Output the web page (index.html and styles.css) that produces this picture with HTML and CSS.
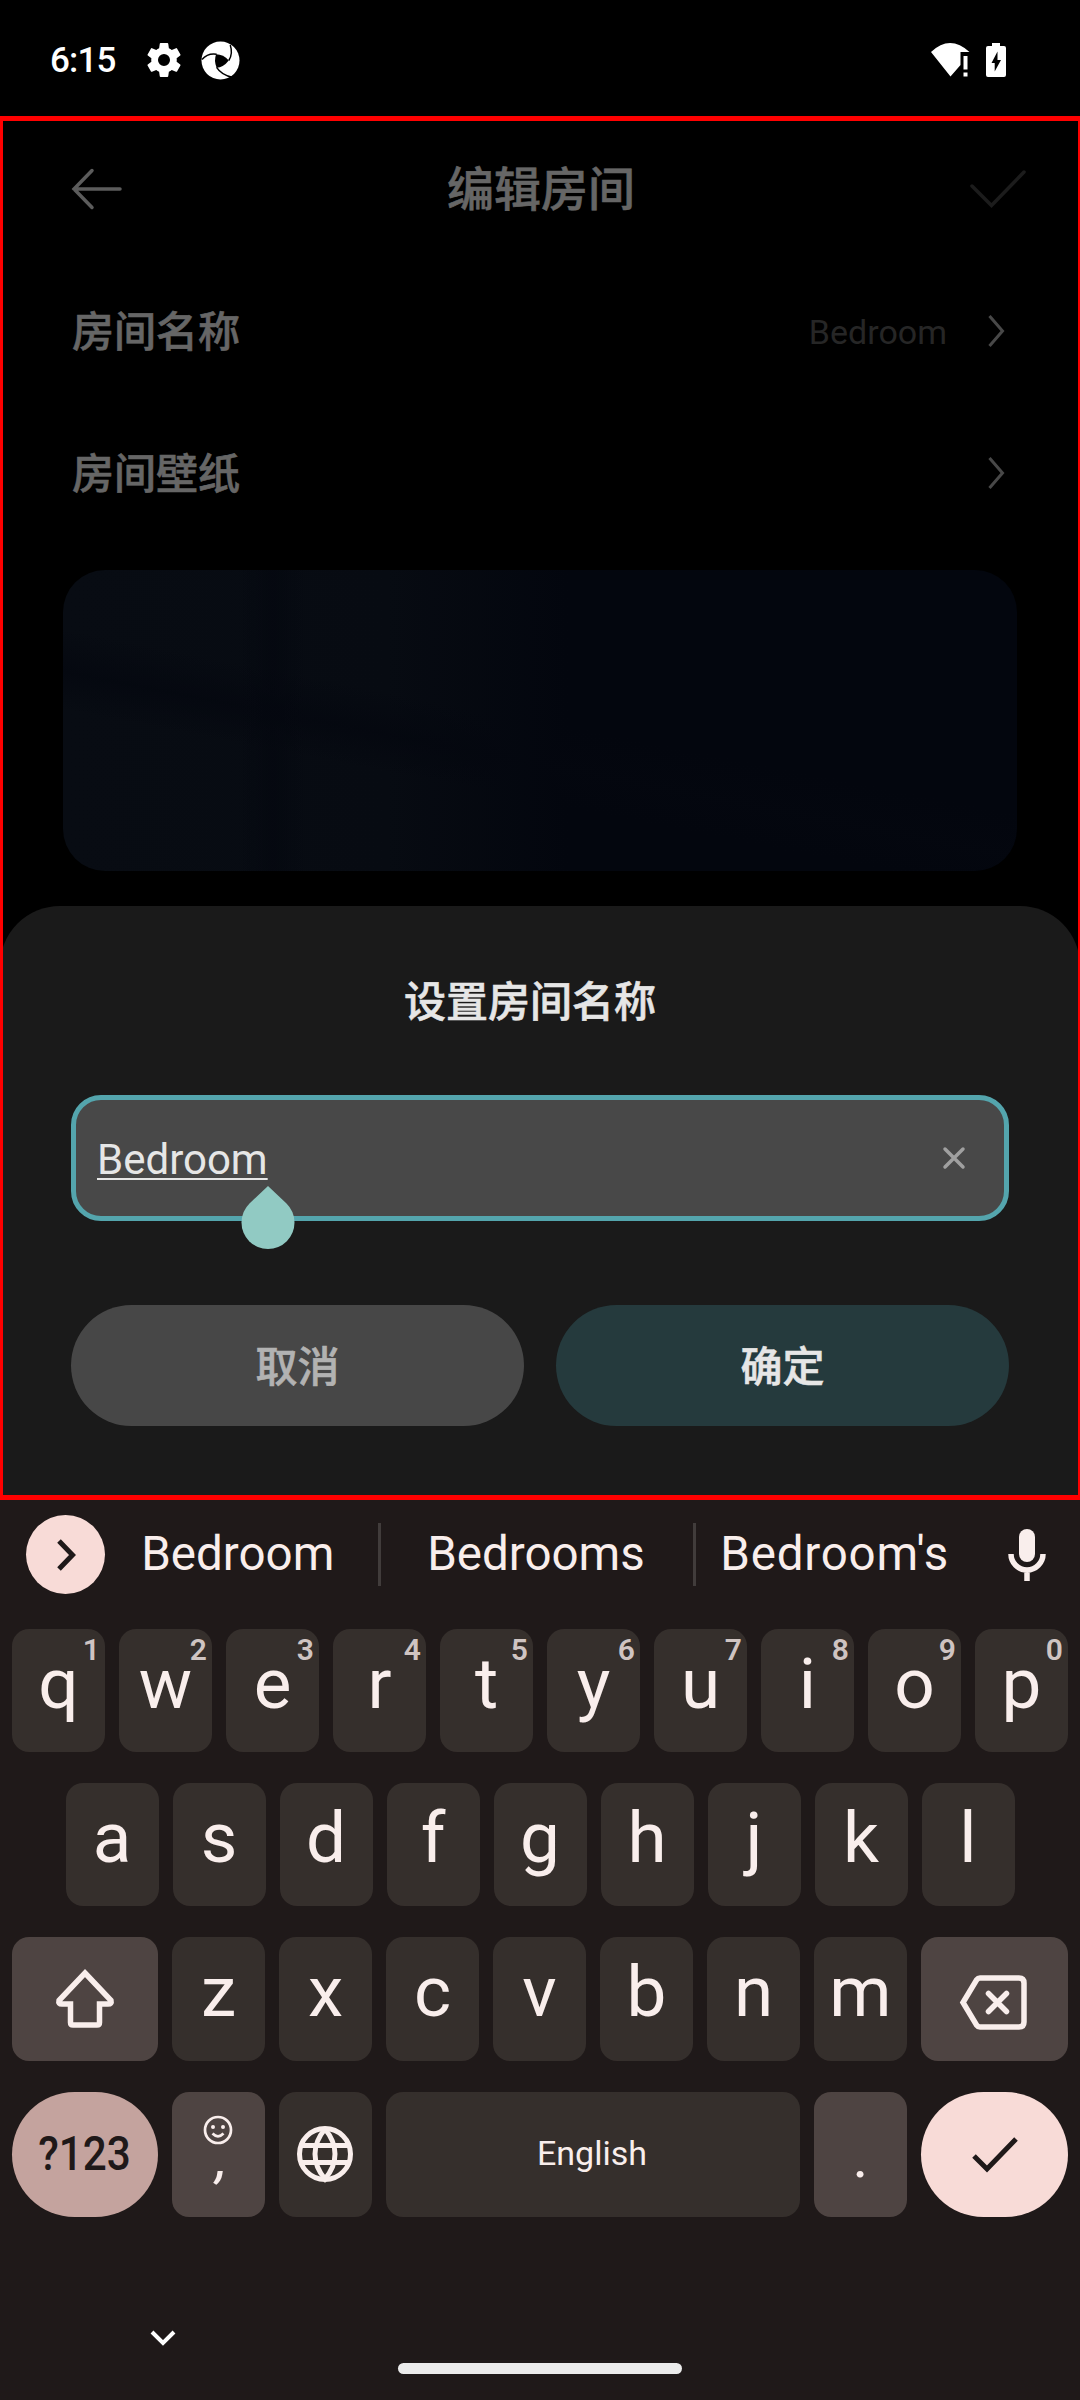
FILE: index.html
```html
<!DOCTYPE html>
<html lang="zh-CN">
<head>
<meta charset="utf-8">
<title>编辑房间</title>
<link rel="stylesheet" href="styles.css">
</head>
<body>
<div class="phone">
  <header class="status">
    <span class="clock">6:15</span>
    <svg class="gear" viewBox="2.400 2.400 19.200 19.200"><path d="M19.14 12.94c.04-.3.06-.61.06-.94s-.02-.64-.07-.94l2.03-1.58a.49.49 0 0 0 .12-.61l-1.92-3.32a.49.49 0 0 0-.59-.22l-2.39.96a7 7 0 0 0-1.62-.94L14.4 2.81A.48.48 0 0 0 13.92 2.4h-3.84a.47.47 0 0 0-.47.41l-.36 2.54c-.59.24-1.13.57-1.62.94l-2.39-.96a.48.48 0 0 0-.59.22L2.74 8.87a.47.47 0 0 0 .12.61l2.03 1.58c-.05.3-.09.63-.09.94s.02.64.07.94l-2.03 1.58a.49.49 0 0 0-.12.61l1.92 3.32c.12.22.37.29.59.22l2.39-.96c.5.38 1.03.7 1.62.94l.36 2.54c.05.24.24.41.48.41h3.84c.24 0 .44-.17.47-.41l.36-2.54c.59-.24 1.13-.56 1.62-.94l2.39.96c.22.08.47 0 .59-.22l1.92-3.32a.47.47 0 0 0-.12-.61zM12 15.4a3.4 3.4 0 1 1 0-6.8 3.4 3.4 0 0 1 0 6.8z"/></svg>
    <svg class="swirl" viewBox="0 0 40 40"><circle cx="20" cy="20" r="19.5"/><path class="hole" d="M15.500 13.500Q23 13.500 28.500 20Q23 27 16 27.500Q13 20 15.500 13.500Z"/><path class="cut" d="M1 19Q7 12 16 13.500M30 4Q33 13 28.500 20M16 27Q21 35 33 37.500"/></svg>
    <span class="spacer"></span>
    <svg class="wifi" viewBox="0 0 40 34"><path d="M0 9Q19 -9 38.500 9H29.500V22L19.500 33.500Z"/><path d="M32.500 13H36.500V26.500H32.500zM32.500 29.500H36.500V33.500H32.500z"/></svg>
    <svg class="battery" viewBox="0 0 20 34"><path d="M6 0h8v3h4q2 0 2 2v27q0 2-2 2H2q-2 0-2-2V5q0-2 2-2h4z"/><path class="bolt" d="M11.500 8.500L5.500 20h3.200v8.500L15 17h-3.500z"/></svg>
  </header>

  <main class="app">
    <div class="bar">
      <svg class="back" viewBox="0 0 50 40"><path d="M20 1.500L2 20L20 38.500M2 20H48"/></svg>
      <h1>编辑房间</h1>
      <svg class="done" viewBox="0 0 56 38"><path d="M2 16L21.500 35.500L54 2"/></svg>
    </div>
    <div class="row"><span class="label">房间名称</span><span class="value">Bedroom</span><svg class="chev" viewBox="0 0 16 32"><path d="M1.500 1L14.500 16L1.500 31"/></svg></div>
    <div class="row"><span class="label">房间壁纸</span><svg class="chev" viewBox="0 0 16 32"><path d="M1.500 1L14.500 16L1.500 31"/></svg></div>
    <div class="wallpaper"></div>

    <section class="sheet">
      <h2>设置房间名称</h2>
      <div class="field">
        <span class="typed">Bedroom<svg class="drop" viewBox="0 0 54 64"><path d="M27 0L45.500 17.500A26.500 26.500 0 1 1 8.500 17.500Z"/></svg></span>
        <svg class="clear" viewBox="0 0 22 22"><path d="M2 2L20 20M20 2L2 20"/></svg>
      </div>
      <div class="actions">
        <button class="cancel">取消</button>
        <button class="ok">确定</button>
      </div>
    </section>
  </main>

  <section class="keyboard">
    <div class="suggest">
      <span class="expand"><svg viewBox="0 0 20 32"><path d="M3 2L16.500 16L3 30"/></svg></span>
      <span class="word w1">Bedroom</span><i></i>
      <span class="word w2">Bedrooms</span><i></i>
      <span class="word w3">Bedroom's</span>
      <svg class="mic" viewBox="0 0 38 52"><path d="M19 0a8 8 0 0 1 8 8v17a8 8 0 0 1-16 0V8a8 8 0 0 1 8-8z"/><path class="line" d="M3 25a16 16 0 0 0 32 0M19 41v11"/></svg>
    </div>
    <div class="keys">
      <div class="krow"><b>q<sup>1</sup></b><b>w<sup>2</sup></b><b>e<sup>3</sup></b><b>r<sup>4</sup></b><b>t<sup>5</sup></b><b>y<sup>6</sup></b><b>u<sup>7</sup></b><b>i<sup>8</sup></b><b>o<sup>9</sup></b><b>p<sup>0</sup></b></div>
      <div class="krow second"><b>a</b><b>s</b><b>d</b><b>f</b><b>g</b><b>h</b><b>j</b><b>k</b><b>l</b></div>
      <div class="krow third">
        <b class="wide alt"><svg class="shift" viewBox="0 0 60 60"><path d="M30 4L56 31.500Q57 35 53 35H44.500V53.500Q44.500 56 42 56H18Q15.500 56 15.500 53.500V35H7Q3 35 4 31.500Z"/></svg></b>
        <b>z</b><b>x</b><b>c</b><b>v</b><b>b</b><b>n</b><b>m</b>
        <b class="wide end alt"><svg class="del" viewBox="0 0 67 55"><path d="M20 3H59Q64 3 64 8V47Q64 52 59 52H20Q18 52 16.500 50L3 27.500L16.500 5Q18 3 20 3Z"/><path d="M28.500 18.500L46.500 36.500M46.500 18.500L28.500 36.500"/></svg></b>
      </div>
      <div class="krow fourth">
        <b class="wide symbols"><span>?123</span></b>
        <b class="alt comma"><svg class="smile" viewBox="0 0 30 30"><circle cx="15" cy="15" r="13"/><path d="M9.500 18.500Q15 24 20.500 18.500"/><path class="dot" d="M10 12v.1M20 12v.1"/></svg><em>,</em></b>
        <b class="lang"><svg class="globe" viewBox="0 0 58 58"><circle cx="29" cy="29" r="25.500"/><path d="M5 20.500H53M5 37.500H53"/><path d="M29 4Q19 16 19 29T29 54Q39 42 39 29T29 4"/></svg></b>
        <b class="space">English</b>
        <b class="alt period">.</b>
        <b class="wide end enter"><svg viewBox="0 0 46 38"><path d="M2 20L15 33L44 3"/></svg></b>
      </div>
    </div>
    <footer class="nav">
      <svg class="hide" viewBox="0 0 26 16"><path d="M2 2L13 13L24 2"/></svg>
      <span class="pill"></span>
    </footer>
  </section>
</div>
</body>
</html>
```
FILE: styles.css
```css
* { box-sizing: border-box; }
body { margin: 0; background: #000; font-family: Roboto, "Noto Sans CJK SC", sans-serif; }
.phone { width: 1080px; height: 2400px; display: flex; flex-direction: column; overflow: hidden; }
svg { display: block; flex: none; fill: none; overflow: visible; }
h1, h2 { margin: 0; font-weight: 500; }
h1, h2, .label, .actions button { -webkit-text-stroke: 0.6px currentColor; }

.status { height: 116px; display: flex; align-items: center; padding: 4px 74px 0 50px; }
.clock { width: 97px; color: #fff; font-size: 35px; font-weight: 500; letter-spacing: -0.8px; }
.gear { width: 34px; height: 34px; fill: #fff; }
.swirl { width: 39px; height: 39px; margin-left: 20px; fill: #fff; }
.swirl .hole { fill: #000; }
.swirl .cut { fill: none; stroke: #000; stroke-width: 1.500; }
.spacer { flex: 1; }
.wifi { width: 40px; height: 34px; fill: #fff; }
.battery { width: 20px; height: 34px; margin-left: 15px; fill: #fff; }
.battery .bolt { fill: #000; }

.app { height: 1384px; border: solid #f00; border-width: 5px 2px 5px 3px; display: flex; flex-direction: column; }
.bar { height: 136px; display: flex; align-items: center; justify-content: space-between; padding: 0 52px 0 69px; }
.bar h1 { font-size: 47px; line-height: 70px; color: #666; margin-right: 10px; padding-top: 2px; }
.back { width: 50px; height: 40px; stroke: #5c5c5c; stroke-width: 3.500; stroke-linecap: round; }
.done { width: 56px; height: 38px; stroke: #1c1c1c; stroke-width: 3.500; stroke-linecap: round; }
.row { height: 142px; display: flex; align-items: center; padding: 5px 74px 0 69px; }
.label { flex: 1; font-size: 42px; font-weight: 500; color: #666; padding-bottom: 4px; }
.value { font-size: 34px; color: #262626; margin-right: 41px; padding-top: 2px; }
.chev { width: 16px; height: 32px; stroke: #484848; stroke-width: 3; }
.wallpaper { height: 301px; margin: 29px 61px 0 60px; border-radius: 42px; background:
  linear-gradient(90deg, transparent 18.500%, #04070faa 22%, transparent 25.500%),
  linear-gradient(191deg, transparent 50%, #04070fbb 59%, transparent 67%),
  linear-gradient(90deg, #080c13 0%, #070b12 34%, #03060e 53%); }

.sheet { flex: 1; margin: 35px -2px 0 -3px; background: #1a1a1a; border-radius: 60px 60px 0 0; padding: 66px 71px 0; clip-path: inset(0 2px 0 3px); }
.sheet h2 { font-size: 42px; line-height: 62px; color: #e6e6e6; text-align: center; margin-right: 20px; }
.field { height: 126px; margin-top: 61px; border: 5px solid #54a5ad; border-radius: 30px; background: #484848; display: flex; align-items: center; justify-content: space-between; padding: 0 39px 0 21px; }
.typed { position: relative; font-size: 42px; line-height: 50px; color: #e6e6e6; padding-top: 3px; text-decoration: underline; text-decoration-thickness: 2px; text-underline-offset: 4px; }
.drop { position: absolute; right: -27px; top: 54px; width: 54px; height: 64px; fill: #91cac3; }
.clear { width: 22px; height: 22px; stroke: #a0a0a0; stroke-width: 3.500; stroke-linecap: round; }
.actions { display: grid; grid-template-columns: 1fr 1fr; gap: 32px; margin-top: 84px; }
.actions button { height: 121px; border: 0; border-radius: 61px; font: 500 42px Roboto, "Noto Sans CJK SC", sans-serif; padding: 0 0 4px; }
.cancel { background: #474747; color: #b2b2b2; }
.ok { background: #253a3d; color: #e6e6e6; }

.keyboard { flex: 1; background: #1f1919; }
.suggest { height: 129px; padding: 15px 34px 0 26px; display: flex; align-items: flex-start; }
.expand { width: 79px; height: 79px; border-radius: 50%; background: #f8dbd7; display: grid; place-items: center; }
.expand svg { width: 20px; height: 32px; margin-left: 1px; stroke: #1f1919; stroke-width: 5; }
.suggest i { width: 3px; height: 63px; margin-top: 8px; background: #413c3b; }
.word { text-align: center; font-size: 47.500px; line-height: 78px; color: #f9eeec; white-space: nowrap; }
.w1 { width: 273px; padding-right: 7px; }
.w2 { width: 313px; padding-right: 2px; }
.w3 { width: 277px; letter-spacing: 0.8px; }
.mic { width: 38px; height: 52px; margin: 14px 0 0 35px; fill: #f9eeec; }
.mic .line { fill: none; stroke: #f9eeec; stroke-width: 5.500; }
.keys { display: flex; flex-direction: column; gap: 31px; }
.krow { height: 123px; display: flex; gap: 14px; padding-left: 12px; }
.krow b { position: relative; width: 93px; border-radius: 17px; background: #352f2c; color: #f9eeec; font-weight: 400; font-size: 71px; line-height: 109px; text-align: center; }
.second { padding-left: 65.500px; }
.third { height: 124px; }
.fourth { height: 125px; }
sup { position: absolute; right: 5px; top: 6px; font-size: 30px; line-height: 30px; font-weight: 600; color: #cfc4c2; }
.krow .wide { width: 146px; display: grid; place-items: center; }
.krow .end { width: 147px; }
.krow .alt { background: #4e4442; }
.shift { width: 60px; height: 60px; stroke: #f9eeec; stroke-width: 5.500; }
.del { width: 67px; height: 55px; margin: 6px 3px 0 0; stroke: #f9eeec; stroke-width: 5.500; stroke-linecap: round; }
.krow .symbols { border-radius: 63px; background: #c4a39e; color: #1f1919; font-size: 48px; font-weight: 500; padding-bottom: 3px; }
.symbols span { display: block; transform: scaleX(0.88); }
.krow .comma { display: flex; flex-direction: column; align-items: center; padding-top: 23px; }
.smile { width: 30px; height: 30px; margin-right: 1px; stroke: #f9eeec; stroke-width: 2.700; }
.smile .dot { stroke-width: 4; stroke-linecap: round; }
.comma em { font-size: 50px; line-height: 50px; margin: -10px 0 0 6px; font-weight: 500; }
.krow .lang { display: grid; place-items: center; padding: 0 1px 1px 0; }
.globe { width: 58px; height: 58px; stroke: #f9eeec; stroke-width: 5; }
.krow .space { width: 414px; padding-right: 2px; font-size: 34px; line-height: 122px; }
.krow .period { font-size: 60px; line-height: 129px; }
.krow .enter { border-radius: 63px; background: #f8dbd7; }
.enter svg { width: 46px; height: 38px; stroke: #1f1919; stroke-width: 5; }
.nav { height: 183px; padding-top: 113px; display: flex; flex-direction: column; align-items: center; }
.hide { width: 26px; height: 16px; align-self: flex-start; margin-left: 150px; stroke: #fff; stroke-width: 4; }
.pill { width: 284px; height: 11px; margin-top: 17px; border-radius: 6px; background: #ebebeb; }
```
